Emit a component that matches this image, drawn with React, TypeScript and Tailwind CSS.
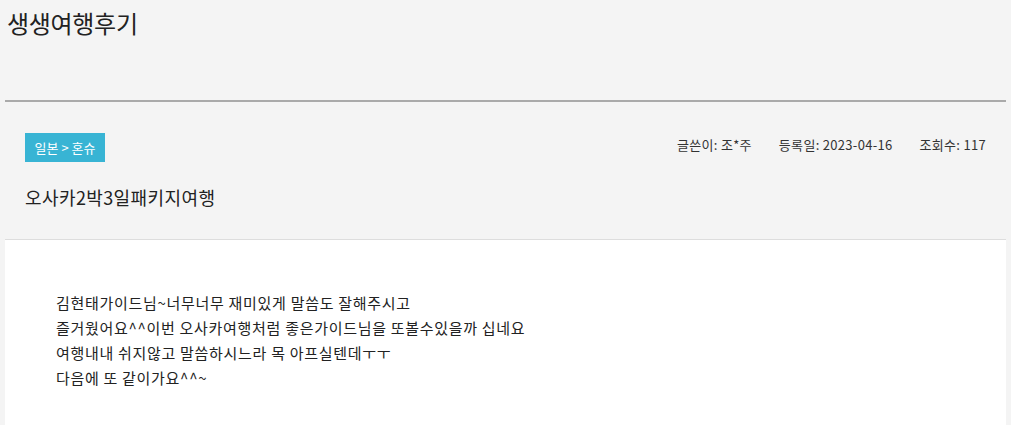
const body = [
  '김현태가이드님~너무너무 재미있게 말씀도 잘해주시고',
  '즐거웠어요^^이번 오사카여행처럼 좋은가이드님을 또볼수있을까 십네요',
  '여행내내 쉬지않고 말씀하시느라 목 아프실텐데ㅜㅜ',
  '다음에 또 같이가요^^~',
];

const meta = [
  ['글쓴이', '조*주'],
  ['등록일', '2023-04-16'],
  ['조회수', '117'],
];

export default function App() {
  return (
    <div
      className="h-[425px] overflow-hidden bg-[#f4f4f4] px-[5px] text-[#222]"
      style={{ fontFamily: '"Malgun Gothic", "Noto Sans CJK KR", sans-serif' }}
    >
      {/* 게시판 제목 */}
      <h1 className="h-[95px] pl-[2px] pt-[6px] text-[24px] leading-[34px] tracking-[-0.3px]">
        생생여행후기
      </h1>
      <div className="mt-[5px] border-b-2 border-[#aaa]" />

      {/* 글 정보 */}
      <div className="px-[20px] pt-[31px]">
        <div className="flex items-start justify-between">
          <span className="flex h-[29px] w-[80px] items-center justify-center bg-[#38b4d4] text-[13px] text-white">
            일본 &gt; 혼슈
          </span>
          <div className="mt-[2px] flex gap-[27px] text-[13px] leading-[20px] tracking-[0.3px] text-[#333]">
            {meta.map(([k, v]) => (
              <span key={k}>
                {k}: {v}
              </span>
            ))}
          </div>
        </div>
        <h2 className="mt-[22px] text-[18px] leading-[26px] tracking-[0.4px]">
          오사카2박3일패키지여행
        </h2>
      </div>

      {/* 본문 */}
      <div className="mt-[29px] h-[200px] border-t border-[#ddd] bg-white pl-[51px] pt-[50px] text-[15px] leading-[25px] tracking-[0.7px] text-[#222]">
        {body.map((line) => (
          <p key={line}>{line}</p>
        ))}
      </div>
    </div>
  );
}
